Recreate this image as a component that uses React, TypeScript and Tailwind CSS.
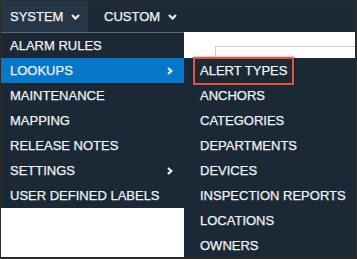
import type React from "react";

const menu = [
  { label: "ALARM RULES" },
  { label: "LOOKUPS", active: true, sub: true },
  { label: "MAINTENANCE" },
  { label: "MAPPING" },
  { label: "RELEASE NOTES" },
  { label: "SETTINGS", sub: true },
  { label: "USER DEFINED LABELS" },
];

const lookups = [
  "ALERT TYPES",
  "ANCHORS",
  "CATEGORIES",
  "DEPARTMENTS",
  "DEVICES",
  "INSPECTION REPORTS",
  "LOCATIONS",
  "OWNERS",
];

const ChevronDown: React.FC = () => (
  <svg width="9" height="6" viewBox="0 0 9 6" className="ml-[8px]">
    <polyline
      points="1,1 4.5,4.5 8,1"
      fill="none"
      stroke="#eef1f4"
      strokeWidth="2.2"
    />
  </svg>
);

const ChevronRight: React.FC = () => (
  <svg width="6" height="8" viewBox="0 0 6 8">
    <polyline
      points="1,1 4.3,4 1,7"
      fill="none"
      stroke="#eef1f4"
      strokeWidth="2.2"
    />
  </svg>
);

export default function App() {
  return (
    <div className="relative w-[357px] h-[259px] overflow-hidden bg-white border-l border-t border-r-2 border-b-2 border-[#2b2b2b] font-['Liberation_Sans',Arial,sans-serif] text-[13px] leading-none text-[#f1f3f5] [-webkit-text-stroke:0.25px_#f1f3f5]">
      <div className="flex h-[31px] bg-[#1c2a38]">
        <div className="flex items-center w-[87px] pl-[9px] bg-[#253646]">
          SYSTEM
          <ChevronDown />
        </div>
        <div className="flex items-center ml-[16px]">
          CUSTOM
          <ChevronDown />
        </div>
      </div>

      {/* page content behind the menu: a search field */}
      <div className="flex pl-[214px] pt-[14px]">
        <div className="flex-1 h-[40px] border-t border-l border-[#cfcfcf]" />
      </div>

      <div className="absolute left-0 top-[31px] w-[183px] border-t border-[#5b6773] bg-[#1b2836]">
        {menu.map((m) => (
          <div
            key={m.label}
            className={
              "flex items-center justify-between h-[25px] pl-[9px] pr-[11px] " +
              (m.active ? "bg-[#0877c9]" : "")
            }
          >
            <span>{m.label}</span>
            {m.sub ? <ChevronRight /> : null}
          </div>
        ))}
      </div>

      <div className="absolute left-[183px] top-[57px] w-[171px] bg-[#1b2836]">
        {lookups.map((l, i) => (
          <div key={l} className="relative flex items-center h-[25px] pl-[16px]">
            {i === 0 ? (
              <div className="absolute left-[9px] top-[-1px] w-[101px] h-[28px] border-2 border-[#e4533f] shadow-[0_0_2px_rgba(0,0,0,0.5)]" />
            ) : null}
            <span className="relative">{l}</span>
          </div>
        ))}
      </div>
    </div>
  );
}
